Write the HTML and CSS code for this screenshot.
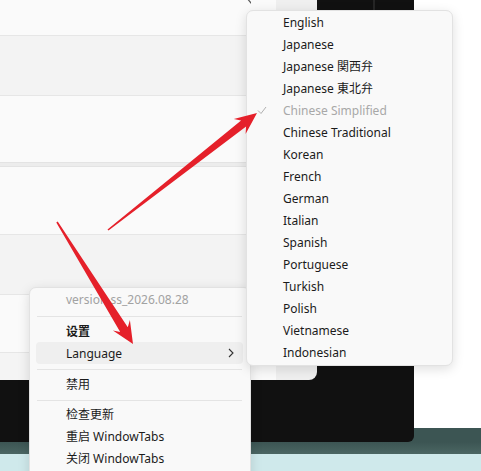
FILE: index.html
```html
<!DOCTYPE html>
<html>
<head>
<meta charset="utf-8">
<link rel="stylesheet" href="styles.css">
</head>
<body>
<div class="desk">
  <div class="upper">
    <div class="left-area">
      <div class="panel">
        <div class="row r1">
          <svg class="top-chev" width="12" height="8" viewBox="0 0 12 8"><polyline points="1,-3 6,3 11,-3" fill="none" stroke="#5a5a5a" stroke-width="1.2"/></svg>
        </div>
        <div class="row r2"></div>
        <div class="row r3"></div>
        <div class="row r4"></div>
        <div class="row r5"></div>
        <div class="row r6"></div>
        <div class="row r7"></div>
        <div class="row r8"></div>
      </div>
      <div class="c2a"></div>
      <div class="c2b"></div>
      <div class="c3"><div class="c3-div"></div></div>
    </div>
    <div class="right-area"><div class="right-white"></div></div>
  </div>
  <div class="teal"></div>
  <div class="cyan"></div>

  <div class="menu ctx">
    <div class="item muted">version ss_2026.08.28</div>
    <div class="sep s1"></div>
    <div class="item bold short">设置</div>
    <div class="item hot">Language
      <svg class="sub-chev" width="6" height="10" viewBox="0 0 6 10"><polyline points="1,1 5,5 1,9" fill="none" stroke="#333" stroke-width="1.1"/></svg>
    </div>
    <div class="sep s1"></div>
    <div class="item short">禁用</div>
    <div class="sep s2"></div>
    <div class="item">检查更新</div>
    <div class="item">重启 WindowTabs</div>
    <div class="item">关闭 WindowTabs</div>
  </div>

  <div class="menu sub">
    <div class="lang">English</div>
    <div class="lang">Japanese</div>
    <div class="lang">Japanese 関西弁</div>
    <div class="lang">Japanese 東北弁</div>
    <div class="lang checked">
      <svg class="check" width="10" height="9" viewBox="0 0 10 9"><polyline points="1,4.5 4,7.5 9,1" fill="none" stroke="#b0b0b0" stroke-width="1"/></svg>
      Chinese Simplified</div>
    <div class="lang">Chinese Traditional</div>
    <div class="lang">Korean</div>
    <div class="lang">French</div>
    <div class="lang">German</div>
    <div class="lang">Italian</div>
    <div class="lang">Spanish</div>
    <div class="lang">Portuguese</div>
    <div class="lang">Turkish</div>
    <div class="lang">Polish</div>
    <div class="lang">Vietnamese</div>
    <div class="lang">Indonesian</div>
  </div>

  <svg class="arrows" width="481" height="471" viewBox="0 0 481 471">
    <polygon fill="#e5202a" points="107.5,229.4 241.1,120.4 233.8,119.1 257,113 245.6,134.1 246.1,126.6 108.5,230.6"/>
    <polygon fill="#e5202a" points="56.3,222.4 120.2,332.0 112.9,330.6 133,344 129.9,320.0 127.8,327.2 57.7,221.6"/>
  </svg>
</div>
</body>
</html>
```

FILE: styles.css
```css
* { box-sizing: border-box; }
html, body { margin: 0; padding: 0; }
body {
  width: 481px;
  height: 471px;
  overflow: hidden;
  background: #ffffff;
  font-family: "Noto Sans", "Noto Sans CJK SC", sans-serif;
}
.desk {
  position: relative;
  width: 481px;
  height: 471px;
  display: flex;
  flex-direction: column;
}
.upper {
  display: flex;
  height: 442px;
  background: #3c5553;
}
.left-area {
  width: 414px;
  height: 442px;
  display: flex;
  align-items: flex-start;
  background: #111111;
  border-bottom-right-radius: 6px;
}
.panel {
  width: 251px;
  display: flex;
  flex-direction: column;
}
.row { width: 100%; }
.r1 { height: 36px; background: #fafafa; border-bottom: 1px solid #e6e6e6; display: flex; justify-content: flex-end; }
.r2 { height: 60px; background: #f3f3f3; border-bottom: 1px solid #e6e6e6; }
.r3 { height: 66px; background: #fafafa; }
.r4 { height: 5px; background: #ececec; border-top: 1px solid #e3e3e3; border-bottom: 1px solid #e3e3e3; }
.r5 { height: 68px; background: #fafafa; border-bottom: 1px solid #e6e6e6; }
.r6 { height: 60px; background: #f3f3f3; border-bottom: 1px solid #e6e6e6; }
.r7 { height: 58px; background: #fafafa; border-bottom: 1px solid #e6e6e6; }
.r8 { height: 27px; background: #f4f4f4; }
.top-chev { margin-right: -6px; }
.c2a { width: 25px; height: 380px; background: #fafafa; }
.c2b { width: 41px; height: 380px; background: #efefef; border-bottom-right-radius: 8px; }
.c3 {
  width: 97px;
  height: 442px;
  display: flex;
  padding-left: 56px;
}
.c3-div { width: 2px; height: 12px; background: #262626; }
.right-area { flex: 1; display: flex; flex-direction: column; }
.right-white { height: 428px; background: #ffffff; }
.teal { height: 12px; background: linear-gradient(#3c5553, #4b6663); }
.cyan { flex: 1; background: #cfe9eb; }

.menu {
  position: absolute;
  background: #f9f9f9;
  border: 1px solid #e2e2e2;
  border-radius: 7px;
  box-shadow: 0 3px 12px rgba(0, 0, 0, 0.13);
  color: #1b1b1b;
  font-size: 12px;
}
.ctx {
  left: 29px;
  top: 287px;
  width: 222px;
  height: 200px;
  padding: 1px 7px 0 6px;
}
.item {
  height: 22px;
  line-height: 22px;
  padding-left: 30px;
  position: relative;
  border-radius: 4px;
}
.item.short { height: 21px; line-height: 21px; }
.item.muted { color: #a2a2a2; }
.item.bold { font-weight: 700; }
.item.hot { background: #efefef; line-height: 23px; }
.sub-chev { position: absolute; right: 9px; top: 6px; }
.sep { border-bottom: 1px solid #e4e4e4; margin: 0 1px; }
.sep.s1 { height: 6px; margin-bottom: 4px; }
.sep.s2 { height: 6px; margin-bottom: 3px; }

.sub {
  left: 246px;
  top: 10px;
  width: 207px;
  height: 356px;
  padding-top: 1px;
}
.lang {
  height: 22px;
  line-height: 22px;
  padding-left: 36px;
  position: relative;
}
.lang.checked { color: #a8a8a8; }
.check { position: absolute; left: 10px; top: 6px; }
.arrows { position: absolute; left: 0; top: 0; pointer-events: none; }
```
